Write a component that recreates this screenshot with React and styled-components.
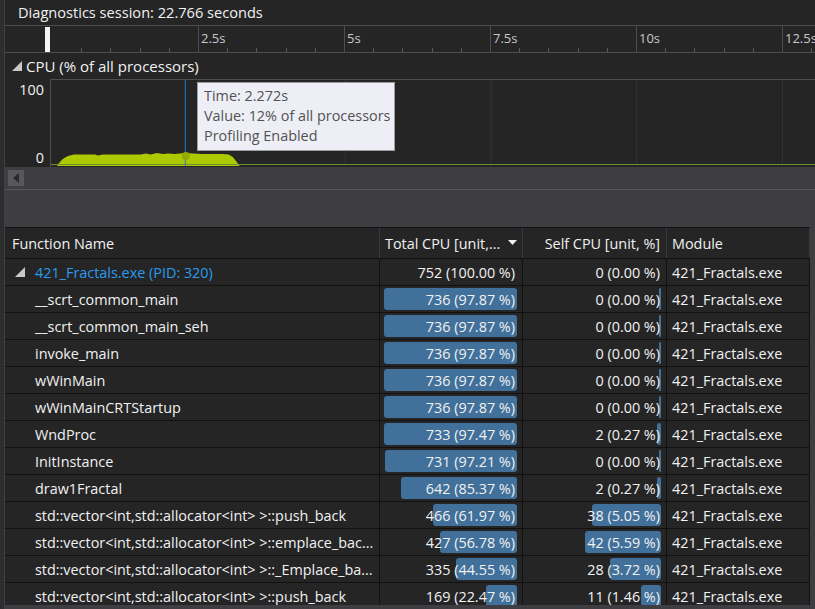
import React from 'react'
import styled, { createGlobalStyle } from 'styled-components'

const GlobalStyle = createGlobalStyle`
  html, body {
    margin: 0;
    padding: 0;
    background: #2d2d30;
    overflow: hidden;
  }
  body {
    font-family: 'Open Sans', 'Noto Sans', sans-serif;
    font-size: 14.4px;
    color: #f1f1f1;
  }
`

const PX_PER_SEC = 58.4
const ZERO_X = 47

const rows = [
  { name: '__scrt_common_main', total: 736, totalPct: '97.87', self: 0, selfPct: '0.00' },
  { name: '__scrt_common_main_seh', total: 736, totalPct: '97.87', self: 0, selfPct: '0.00' },
  { name: 'invoke_main', total: 736, totalPct: '97.87', self: 0, selfPct: '0.00' },
  { name: 'wWinMain', total: 736, totalPct: '97.87', self: 0, selfPct: '0.00' },
  { name: 'wWinMainCRTStartup', total: 736, totalPct: '97.87', self: 0, selfPct: '0.00' },
  { name: 'WndProc', total: 733, totalPct: '97.47', self: 2, selfPct: '0.27' },
  { name: 'InitInstance', total: 731, totalPct: '97.21', self: 0, selfPct: '0.00' },
  { name: 'draw1Fractal', total: 642, totalPct: '85.37', self: 2, selfPct: '0.27' },
  { name: 'std::vector<int,std::allocator<int> >::push_back', total: 466, totalPct: '61.97', self: 38, selfPct: '5.05' },
  { name: 'std::vector<int,std::allocator<int> >::emplace_bac...', total: 427, totalPct: '56.78', self: 42, selfPct: '5.59' },
  { name: 'std::vector<int,std::allocator<int> >::_Emplace_ba...', total: 335, totalPct: '44.55', self: 28, selfPct: '3.72' },
  { name: 'std::vector<int,std::allocator<int> >::push_back', total: 169, totalPct: '22.47', self: 11, selfPct: '1.46' },
]

const Page = styled.div`
  display: flex;
  width: 815px;
  height: 609px;
  overflow: hidden;
`

const LeftStrip = styled.div`
  width: 4px;
  flex-shrink: 0;
  background: #2d2d30;
  border-right: 1px solid #3f3f46;
`

const Main = styled.div`
  flex: 1;
  display: flex;
  flex-direction: column;
  min-width: 0;
  background: #3e3e42;
`

const SessionBar = styled.div`
  height: 25px;
  line-height: 24px;
  padding-left: 13px;
  background: #252526;
  color: #f1f1f1;
  font-size: 14.6px;
  white-space: nowrap;
`

const Ruler = styled.div`
  position: relative;
  height: 26px;
  background: #252526;
  border-top: 1px solid #4d4d50;
  border-bottom: 1px solid #4d4d50;
`

const Tick = styled.div`
  position: absolute;
  bottom: 0;
  width: 1px;
  height: ${({ $major }) => ($major ? '26px' : '4px')};
  background: ${({ $major }) => ($major ? '#4d4d50' : '#5a5a5e')};
`

const TickLabel = styled.span`
  position: absolute;
  top: 3px;
  font-size: 13px;
  color: #c8c8c8;
`

const Marker = styled.div`
  position: absolute;
  left: 40px;
  top: 1px;
  width: 5px;
  height: 25px;
  background: #f4f4f4;
`

const CpuSection = styled.div`
  background: #252526;
  display: flex;
  flex-direction: column;
`

const CpuTitle = styled.div`
  height: 26px;
  display: flex;
  align-items: center;
  gap: 4px;
  padding-left: 7px;
  font-size: 15px;
  white-space: nowrap;
`

const Expander = styled.svg`
  width: 10px;
  height: 10px;
  flex-shrink: 0;
`

const ChartRow = styled.div`
  display: flex;
  height: 88px;
`

const YAxis = styled.div`
  width: 45px;
  display: flex;
  flex-direction: column;
  justify-content: space-between;
  align-items: flex-end;
  padding: 2px 6px 0 0;
  box-sizing: border-box;
  font-size: 14.4px;
  line-height: 18px;
  color: #f1f1f1;
`

const Chart = styled.div`
  position: relative;
  flex: 1;
  border-top: 1px solid #4d4d50;
  border-left: 1px solid #4d4d50;
  background: #252526;
`

const Plot = styled.svg`
  position: absolute;
  inset: 0;
  width: 100%;
  height: 100%;
`

const Tooltip = styled.div`
  position: absolute;
  left: 146px;
  top: 2px;
  width: 184px;
  padding: 3px 6px 4px;
  background: #eeeff6;
  border: 1px solid #9d9d9d;
  color: #525252;
  font-size: 14.4px;
  line-height: 20px;
  white-space: nowrap;
`

const ScrollBar = styled.div`
  height: 22px;
  display: flex;
  align-items: center;
  padding-left: 3px;
  border-bottom: 1px solid #58585c;
`

const ScrollButton = styled.div`
  width: 16px;
  height: 16px;
  background: #58585c;
  display: flex;
  align-items: center;
  justify-content: center;
`

const Spacer = styled.div`
  height: 37px;
`

const Table = styled.div`
  display: grid;
  grid-template-columns: 375px 143px 144px 143px;
  grid-template-rows: 30px;
  grid-auto-rows: 26px;
  row-gap: 1px;
  width: 805px;
  height: 377px;
  overflow: hidden;
  border-top: 1px solid #111;
  background-color: #111;
`

const Cell = styled.div`
  position: relative;
  display: flex;
  align-items: center;
  justify-content: ${({ $align }) => ($align === 'right' ? 'flex-end' : 'flex-start')};
  padding: ${({ $pad }) => $pad || '0 5px'};
  background: #252526;
  border-right: 1px solid #111;
  white-space: nowrap;
  overflow: hidden;
  color: #f1f1f1;
`

const HeadCell = styled(Cell)`
  border-right-color: #3a3a3c;
`

const HeadRow = styled.div`
  display: contents;
`

const SortArrow = styled.svg`
  margin-left: auto;
  width: 9px;
  height: 6px;
`

const Bar = styled.div`
  position: absolute;
  right: ${({ $right }) => $right}px;
  top: 2px;
  bottom: 2px;
  background: #41709a;
  border-radius: 3px;
`

const CellText = styled.span`
  position: relative;
`

const RootName = styled.span`
  color: #2a9bec;
`

const Tri = ({ color = '#c8c8c8' }) => (
  <Expander viewBox="0 0 10 10">
    <polygon points="10,0 10,10 0,10" fill={color} />
  </Expander>
)

function TimeRuler() {
  const ticks = []
  for (let i = 1; i <= 27; i++) {
    const x = Math.round(ZERO_X + i * (PX_PER_SEC / 2))
    ticks.push(<Tick key={i} $major={i % 5 === 0} style={{ left: x }} />)
  }
  const labels = ['2.5s', '5s', '7.5s', '10s', '12.5s']
  return (
    <Ruler>
      {ticks}
      {labels.map((l, i) => (
        <TickLabel key={l} style={{ left: Math.round(ZERO_X + (i + 1) * 2.5 * PX_PER_SEC) + 3 }}>
          {l}
        </TickLabel>
      ))}
      <Marker />
    </Ruler>
  )
}

function CpuChart() {
  const grid = [1, 2, 3, 4, 5].map(i => Math.round(ZERO_X + i * 2.5 * PX_PER_SEC) - 45)
  return (
    <ChartRow>
      <YAxis>
        <span>100</span>
        <span>0</span>
      </YAxis>
      <Chart>
        <Plot viewBox="0 0 765 87" preserveAspectRatio="none">
          {grid.map(x => (
            <line key={x} x1={x + 0.5} y1="0" x2={x + 0.5} y2="86" stroke="#343436" strokeWidth="1" />
          ))}
          <path
            d="M6,86 C10,80 14,76 23,74.5 L44,74.5 L47,75.5 L52,74.5 L90,74.5 L95,73.5 L100,74.5 L106,73 L112,74 L118,73.5 L124,74 L134,73 L150,74 L160,74 L172,74 L178,74.5 L182,77 L186,82 L189,86 Z"
            fill="#adc900"
          />
          <line x1="0" y1="84.5" x2="765" y2="84.5" stroke="#6f8f34" strokeWidth="1" />
          <line x1="134.5" y1="0" x2="134.5" y2="86" stroke="#1f7ccc" strokeWidth="1" />
          <circle cx="135" cy="76" r="4" fill="#93ab00" />
        </Plot>
        <Tooltip>
          <div>Time: 2.272s</div>
          <div>Value: 12% of all processors</div>
          <div>Profiling Enabled</div>
        </Tooltip>
      </Chart>
    </ChartRow>
  )
}

function DataRow({ row }) {
  const totalW = Math.max(2, Math.round((row.total / 752) * 136))
  const selfW = Math.max(2, Math.round((row.self / 42) * 76))
  return (
    <>
      <Cell $pad="0 0 0 30px">{row.name}</Cell>
      <Cell $align="right" $pad="0 7px 0 5px">
        <Bar $right={5} style={{ width: totalW }} />
        <CellText>{`${row.total} (${row.totalPct} %)`}</CellText>
      </Cell>
      <Cell $align="right" $pad="0 6px 0 5px">
        <Bar $right={5} style={{ width: selfW }} />
        <CellText>{`${row.self} (${row.selfPct} %)`}</CellText>
      </Cell>
      <Cell>421_Fractals.exe</Cell>
    </>
  )
}

function FunctionTable() {
  return (
    <Table>
      <HeadRow>
        <HeadCell $pad="0 0 0 7px">Function Name</HeadCell>
        <HeadCell>
          Total CPU [unit,...
          <SortArrow viewBox="0 0 9 6">
            <polygon points="0,0 9,0 4.5,5" fill="#f1f1f1" />
          </SortArrow>
        </HeadCell>
        <HeadCell $align="right" $pad="0 6px 0 5px">Self CPU [unit, %]</HeadCell>
        <HeadCell>Module</HeadCell>
      </HeadRow>
      <Cell $pad="0 0 0 10px" style={{ gap: 10 }}>
        <Tri />
        <RootName>421_Fractals.exe (PID: 320)</RootName>
      </Cell>
      <Cell $align="right" $pad="0 7px 0 5px">752 (100.00 %)</Cell>
      <Cell $align="right" $pad="0 6px 0 5px">0 (0.00 %)</Cell>
      <Cell>421_Fractals.exe</Cell>
      {rows.map((r, i) => (
        <DataRow key={i} row={r} />
      ))}
    </Table>
  )
}

export default function App() {
  return (
    <Page>
      <GlobalStyle />
      <LeftStrip />
      <Main>
        <SessionBar>Diagnostics session: 22.766 seconds</SessionBar>
        <TimeRuler />
        <CpuSection>
          <CpuTitle>
            <Tri />
            <span>CPU (% of all processors)</span>
          </CpuTitle>
          <CpuChart />
        </CpuSection>
        <ScrollBar>
          <ScrollButton>
            <svg width="6" height="10" viewBox="0 0 6 10">
              <polygon points="6,0 6,10 0,5" fill="#2a2a2c" />
            </svg>
          </ScrollButton>
        </ScrollBar>
        <Spacer />
        <FunctionTable />
      </Main>
    </Page>
  )
}
